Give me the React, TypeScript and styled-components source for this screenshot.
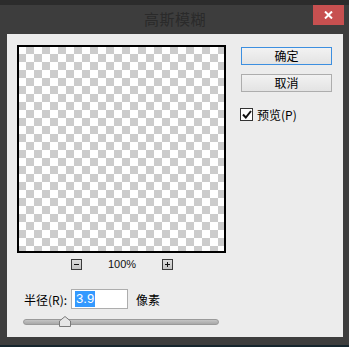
import React, { useState } from 'react'
import styled, { createGlobalStyle } from 'styled-components'

const GlobalStyle = createGlobalStyle`
  html, body {
    margin: 0;
    padding: 0;
    background: #2b2b2b;
  }
  * {
    box-sizing: border-box;
  }
`

const Screen = styled.div`
  width: 349px;
  height: 347px;
  display: flex;
  flex-direction: column;
  background: #2b2b2b;
  overflow: hidden;
  font-family: "Noto Sans CJK SC", "Liberation Sans", sans-serif;
`

const TopStrip = styled.div`
  height: 5px;
  background: #2c2c2c;
`

const BottomStrip = styled.div`
  flex: 1;
  background: #16252d;
`

const Window = styled.div`
  height: 340px;
  display: flex;
  flex-direction: column;
  background: #3d3d3d;
  padding: 0 6px 8px 7px;
`

const TitleBar = styled.div`
  height: 29px;
  display: grid;
  grid-template-columns: 1fr auto 1fr;
  align-items: start;
`

const Title = styled.span`
  grid-column: 2;
  margin-top: 4px;
  font-size: 15px;
  line-height: 20px;
  color: #2a2a2a;
  letter-spacing: 0.5px;
`

const CloseButton = styled.button`
  grid-column: 3;
  justify-self: end;
  width: 31px;
  height: 20px;
  margin-right: -1px;
  padding: 0;
  border: none;
  background: #c75050;
  display: flex;
  align-items: center;
  justify-content: center;
  cursor: pointer;
`

const Panel = styled.div`
  flex: 1;
  background: #ececec;
  padding: 11px 11px 0 10px;
  display: flex;
  flex-direction: column;
`

const TopRow = styled.div`
  display: flex;
  align-items: flex-start;
`

const PreviewColumn = styled.div`
  display: flex;
  flex-direction: column;
  width: 209px;
`

const PreviewFrame = styled.div`
  width: 209px;
  height: 208px;
  border: 2px solid #000;
  background-color: #fff;
  background-image:
    linear-gradient(45deg, #cccccc 25%, transparent 25%, transparent 75%, #cccccc 75%),
    linear-gradient(45deg, #cccccc 25%, transparent 25%, transparent 75%, #cccccc 75%);
  background-size: 16px 16px;
  background-position: -1px -1px, 7px 7px;
`

const ZoomRow = styled.div`
  margin-top: 6px;
  height: 11px;
  display: flex;
  align-items: center;
  justify-content: center;
  gap: 26px;
  padding-left: 1px;
`

const ZoomBox = styled.span`
  width: 11px;
  height: 11px;
  border: 1px solid #3a3a3a;
  background: linear-gradient(#dcdcdc, #c4c4c4);
  display: flex;
  align-items: center;
  justify-content: center;
`

const ZoomText = styled.span`
  font-family: "Liberation Sans", Arial, sans-serif;
  font-size: 11px;
  line-height: 11px;
  color: #111;
`

const SideColumn = styled.div`
  margin-left: 15px;
  padding-top: 2px;
  display: flex;
  flex-direction: column;
  width: 91px;
`

const DialogButton = styled.button<{ $primary?: boolean }>`
  width: 91px;
  height: 18px;
  margin-bottom: 9px;
  padding: 0;
  border: 1px solid ${({ $primary }) => ($primary ? '#3c8fe0' : '#adadad')};
  background: linear-gradient(#f2f2f2, #e3e3e3);
  font-family: "Noto Sans CJK SC", sans-serif;
  font-size: 12px;
  line-height: 16px;
  color: #000;
  cursor: pointer;
`

const CheckRow = styled.label`
  margin-top: 7px;
  display: flex;
  align-items: center;
  gap: 4px;
  font-size: 12px;
  line-height: 13px;
  color: #000;
  cursor: pointer;
`

const CheckBox = styled.span`
  width: 13px;
  height: 13px;
  border: 1px solid #333;
  background: #fff;
  display: flex;
  align-items: center;
  justify-content: center;
  margin-left: -1px;
`

const RadiusRow = styled.div`
  margin-top: 19px;
  height: 20px;
  display: flex;
  align-items: center;
  padding-left: 7px;
  font-size: 12px;
  color: #000;
`

const RadiusInput = styled.div`
  width: 57px;
  height: 20px;
  margin-left: 4px;
  margin-right: 8px;
  border: 1px solid #adadad;
  background: #fff;
  display: flex;
  align-items: center;
  padding-left: 3px;
`

const Selected = styled.span`
  background: #3399ff;
  color: #fff;
  font-family: "Liberation Sans", Arial, sans-serif;
  font-size: 13px;
  line-height: 16px;
  padding: 0 1px;
`

const SliderWrap = styled.div`
  position: relative;
  margin-top: 8px;
  margin-left: 6px;
  width: 196px;
  height: 10px;
  display: flex;
  align-items: center;
`

const Track = styled.div`
  width: 100%;
  height: 6px;
  border: 1px solid #9a9a9a;
  border-radius: 3px;
  background: linear-gradient(#c4c4c4, #a8a8a8);
`

const Thumb = styled.svg`
  position: absolute;
  top: -1px;
  left: 36px;
`

export default function App() {
  const [preview, setPreview] = useState(true)

  return (
    <>
      <GlobalStyle />
      <Screen>
        <TopStrip />
        <Window>
          <TitleBar>
            <Title>高斯模糊</Title>
            <CloseButton aria-label="close">
              <svg width="9" height="8" viewBox="0 0 9 8">
                <path d="M1 0.5 L8 7.5 M8 0.5 L1 7.5" stroke="#fff" strokeWidth="2" />
              </svg>
            </CloseButton>
          </TitleBar>
          <Panel>
            <TopRow>
              <PreviewColumn>
                <PreviewFrame />
                <ZoomRow>
                  <ZoomBox>
                    <svg width="7" height="7" viewBox="0 0 7 7">
                      <path d="M1 3.5 H6" stroke="#111" strokeWidth="1" />
                    </svg>
                  </ZoomBox>
                  <ZoomText>100%</ZoomText>
                  <ZoomBox>
                    <svg width="7" height="7" viewBox="0 0 7 7">
                      <path d="M1 3.5 H6 M3.5 1 V6" stroke="#111" strokeWidth="1" />
                    </svg>
                  </ZoomBox>
                </ZoomRow>
              </PreviewColumn>
              <SideColumn>
                <DialogButton $primary>确定</DialogButton>
                <DialogButton>取消</DialogButton>
                <CheckRow onClick={() => setPreview(!preview)}>
                  <CheckBox>
                    {preview && (
                      <svg width="10" height="9" viewBox="0 0 10 9">
                        <path d="M1 4.5 L3.8 7.5 L9 1" stroke="#111" strokeWidth="2" fill="none" />
                      </svg>
                    )}
                  </CheckBox>
                  预览(P)
                </CheckRow>
              </SideColumn>
            </TopRow>
            <RadiusRow>
              半径(R):
              <RadiusInput>
                <Selected>3.9</Selected>
              </RadiusInput>
              像素
            </RadiusRow>
            <SliderWrap>
              <Track />
              <Thumb width="12" height="11" viewBox="0 0 12 11">
                <path d="M0.5 10.5 V5 L6 0.5 L11.5 5 V10.5 Z" fill="#e6e6e6" stroke="#7a7a7a" />
              </Thumb>
            </SliderWrap>
          </Panel>
        </Window>
        <BottomStrip />
      </Screen>
    </>
  )
}
